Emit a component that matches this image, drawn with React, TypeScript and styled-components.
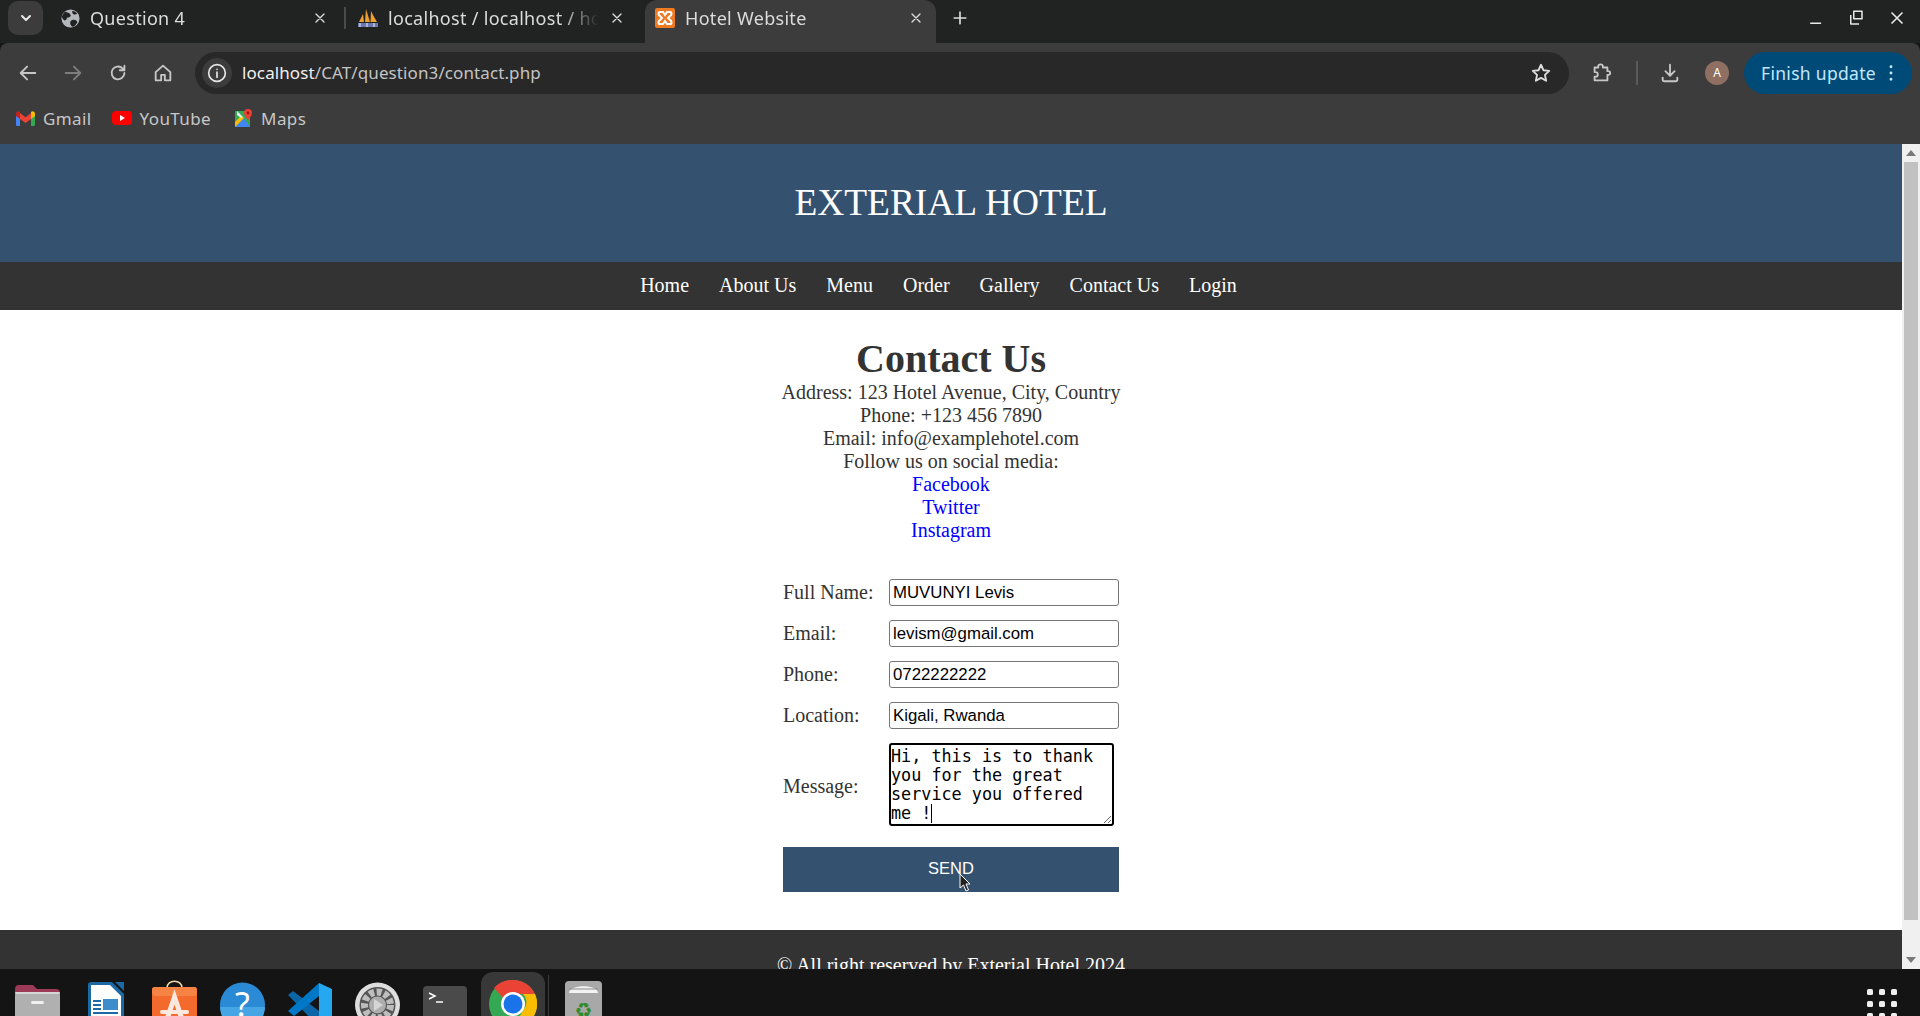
import { ReactNode } from 'react';
import styled, { createGlobalStyle } from 'styled-components';

const GlobalStyle = createGlobalStyle`
	html, body {
		margin: 0;
		padding: 0;
		height: 100%;
		overflow: hidden;
		background: #141414;
	}
	* { box-sizing: border-box; }
`;

const uiFont = `'Noto Sans', 'Open Sans', sans-serif`;
const pageFont = `'Liberation Serif', 'Times New Roman', serif`;

const Screen = styled.div`
	width: 1920px;
	height: 1016px;
	display: flex;
	flex-direction: column;
	overflow: hidden;
`;

/* browser chrome */
const TabStrip = styled.div`
	height: 43px;
	flex: none;
	background: #202322;
	display: flex;
	align-items: flex-start;
	padding-left: 8px;
	font-family: ${uiFont};
`;

const TabSearch = styled.div`
	width: 35px;
	height: 34px;
	margin: 1px 6px 0 0;
	flex: none;
	border-radius: 10px;
	background: #3c3c3c;
	color: #e8e8e8;
	display: flex;
	align-items: center;
	justify-content: center;
`;

const Tab = styled.div<{ $active?: boolean }>`
	width: 291px;
	height: ${(p) => (p.$active ? '43px' : '36px')};
	flex: none;
	margin-left: ${(p) => (p.$active ? '8px' : '0')};
	background: ${(p) => (p.$active ? '#3c3c3c' : 'transparent')};
	border-radius: ${(p) => (p.$active ? '12px 12px 0 0' : '0')};
	display: flex;
	align-items: center;
	padding: ${(p) => (p.$active ? '0 12px 7px 10px' : '0 12px')};
	gap: 10px;
	color: #dcdcdc;
	font-size: 18px;
	letter-spacing: 0.3px;

	svg {
		flex: none;
	}
`;

const TabTitle = styled.span`
	flex: 1;
	min-width: 0;
	overflow: hidden;
	white-space: nowrap;
	mask-image: linear-gradient(to right, #000 82%, transparent 100%);
`;

const TabDivider = styled.div`
	width: 2px;
	height: 22px;
	flex: none;
	margin: 7px 0 0 4px;
	background: #4a4c4b;
`;

const NewTab = styled.div`
	width: 32px;
	height: 36px;
	flex: none;
	margin-left: 8px;
	color: #dcdcdc;
	display: flex;
	align-items: center;
	justify-content: center;
`;

const WindowControls = styled.div`
	margin-left: auto;
	height: 36px;
	width: 125px;
	padding: 0 13px 0 12px;
	display: flex;
	align-items: center;
	justify-content: space-between;
	color: #e8e8e8;
`;

const Toolbar = styled.div`
	height: 56px;
	flex: none;
	background: #3c3c3c;
	border-radius: 8px 8px 0 0;
	display: flex;
	align-items: center;
	padding: 8px 8px 5px 5px;
	color: #c7c7c7;
	font-family: ${uiFont};
`;

const NavIcon = styled.div<{ $width?: number; $dim?: boolean }>`
	width: ${(p) => p.$width ?? 45}px;
	height: 42px;
	flex: none;
	display: flex;
	align-items: center;
	justify-content: center;
	color: ${(p) => (p.$dim ? '#7d7d7d' : '#c7c7c7')};
`;

const Omnibox = styled.div`
	width: 1374px;
	height: 42px;
	flex: none;
	margin: 0 6px 0 10px;
	border-radius: 21px;
	background: #282828;
	display: flex;
	align-items: center;
	padding: 0 17px 0 7px;
	color: #e6e6e6;
	font-size: 17px;
	letter-spacing: 0.1px;
`;

const InfoChip = styled.div`
	width: 30px;
	height: 30px;
	border-radius: 50%;
	background: #3c3c3c;
	display: flex;
	align-items: center;
	justify-content: center;
	margin-right: 10px;
`;

const UrlHost = styled.span`
	color: #f0f0f0;
`;

const UrlPath = styled.span`
	color: #c4c4c4;
`;

const StarSlot = styled.div`
	margin-left: auto;
	display: flex;
	color: #dedede;
`;

const ToolbarDivider = styled.div`
	width: 2px;
	height: 24px;
	flex: none;
	background: #5a5a5a;
	margin: 0 10px;
`;

const Avatar = styled.div`
	width: 24px;
	height: 24px;
	margin: 0 15px 0 13px;
	flex: none;
	border-radius: 50%;
	background: #8e6f62;
	color: #fff;
	font-size: 12px;
	display: flex;
	align-items: center;
	justify-content: center;
`;

const UpdatePill = styled.div`
	width: 168px;
	height: 42px;
	flex: none;
	border-radius: 21px;
	background: #004a77;
	color: #c2e7ff;
	display: flex;
	align-items: center;
	justify-content: space-between;
	padding: 0 11px 0 17px;
	font-size: 17.5px;
	letter-spacing: 0.3px;
	white-space: nowrap;
`;

const Bookmarks = styled.div`
	height: 45px;
	flex: none;
	background: #3c3c3c;
	display: flex;
	align-items: center;
	padding: 0 0 7px 16px;
	gap: 20px;
	color: #c7c7c7;
	font-family: ${uiFont};
	font-size: 17px;
	letter-spacing: 0.4px;
`;

const Bookmark = styled.div`
	display: flex;
	align-items: center;
	gap: 8px;

	&:nth-child(2) {
		margin-right: 4px;
	}
`;

/* page viewport */
const Viewport = styled.div`
	flex: 1;
	min-height: 0;
	display: flex;
	overflow: hidden;
`;

const Page = styled.div`
	flex: 1;
	min-width: 0;
	background: #fff;
	color: #333;
	font-family: ${pageFont};
	font-size: 20px;
	text-align: center;
`;

const Banner = styled.header`
	height: 118px;
	padding-bottom: 2px;
	background: #34526f;
	color: #fff;
	display: flex;
	align-items: center;
	justify-content: center;
	font-size: 37.4px;
	text-transform: uppercase;
`;

const NavBar = styled.nav`
	height: 48px;
	padding: 0 25px 2px 0;
	background: #333;
	display: flex;
	align-items: center;
	justify-content: center;
	gap: 30px;
`;

const NavLink = styled.a`
	color: #fff;
	text-decoration: none;
`;

const Main = styled.main`
	height: 620px;
	padding-top: 26px;
	display: flex;
	flex-direction: column;
	align-items: center;
`;

const Heading = styled.h2`
	margin: 0;
	font-size: 40px;
	line-height: 45px;
`;

const InfoLine = styled.div`
	line-height: 23px;
`;

const SocialLink = styled.a`
	display: block;
	line-height: 23px;
	color: #00f;
	text-decoration: none;
`;

const ContactForm = styled.form`
	width: 336px;
	margin-top: 37px;
	display: flex;
	flex-direction: column;
	text-align: left;
`;

const FieldRow = styled.label`
	height: 27px;
	margin-bottom: 14px;
	display: flex;
	align-items: center;
`;

const FieldLabel = styled.span`
	width: 106px;
	flex: none;
`;

const MessageLabel = styled(FieldLabel)`
	margin-top: 4px;
`;

const TextField = styled.input`
	width: 230px;
	height: 27px;
	padding: 1px 3px;
	border: 1px solid #767676;
	border-radius: 3px;
	background: #fff;
	color: #000;
	font-family: 'Liberation Sans', Arial, sans-serif;
	font-size: 16.8px;
	outline: none;
`;

const MessageRow = styled.label`
	height: 83px;
	margin-bottom: 21px;
	display: flex;
	align-items: center;
`;

const MessageWrap = styled.div`
	position: relative;
	width: 225px;
	height: 83px;
	flex: none;
`;

const MessageBox = styled.textarea`
	display: block;
	width: 225px;
	height: 83px;
	padding: 2px 0 0;
	border: 2px solid #000;
	border-radius: 3px;
	background: #fff;
	color: #000;
	font-family: 'DejaVu Sans Mono', monospace;
	font-size: 16.8px;
	line-height: 19px;
	outline: none;
	resize: both;
	overflow: hidden;
`;

const Caret = styled.span`
	position: absolute;
	left: 42px;
	top: 61px;
	width: 1px;
	height: 19px;
	background: #000;
`;

const SendButton = styled.button`
	position: relative;
	width: 336px;
	height: 45px;
	padding: 0 0 2px;
	border: none;
	background: #34526f;
	color: #fff;
	font-family: 'Liberation Sans', Arial, sans-serif;
	font-size: 16.5px;
`;

const CursorMark = styled.svg`
	position: absolute;
	left: 176px;
	top: 26px;
`;

const Footer = styled.footer`
	height: 39px;
	background: #333;
	color: #fff;
	padding-top: 24px;
	line-height: 23px;
	overflow: hidden;
	white-space: nowrap;
`;

const Scrollbar = styled.div`
	width: 18px;
	flex: none;
	background: #f0f0f0;
	display: flex;
	flex-direction: column;
	align-items: center;
`;

const ScrollArrow = styled.div<{ $down?: boolean }>`
	height: 18px;
	flex: none;
	display: flex;
	align-items: center;
	justify-content: center;
	color: #7a7a7a;
	transform: ${(p) => (p.$down ? 'rotate(180deg)' : 'none')};
`;

const ScrollThumb = styled.div`
	width: 14px;
	height: 758px;
	background: #c1c1c1;
`;

const ScrollTrack = styled.div`
	flex: 1;
`;

/* desktop dock */
const Dock = styled.div`
	height: 47px;
	flex: none;
	background: #141414;
	display: flex;
	align-items: flex-start;
	padding-left: 15px;
	overflow: hidden;
`;

const DockItem = styled.div<{ $width: number; $top: number; $gap: number }>`
	width: ${(p) => p.$width}px;
	height: 64px;
	flex: none;
	margin-top: ${(p) => p.$top}px;
	margin-right: ${(p) => p.$gap}px;
	display: flex;
`;

const ActiveDockItem = styled.div`
	width: 64px;
	height: 70px;
	flex: none;
	margin-top: 3px;
	margin-left: 14px;
	border-radius: 12px;
	background: #383838;
	display: flex;
	justify-content: center;
	padding-top: 8px;
`;

const DockSeparator = styled.div`
	width: 1px;
	height: 47px;
	flex: none;
	margin: 6px 16px 0 3px;
	background: #3a3a3a;
`;

const AppGrid = styled.div`
	margin-left: auto;
	margin-top: 20px;
	margin-right: 23px;
	display: grid;
	grid-template-columns: repeat(3, 6px);
	grid-auto-rows: 6px;
	gap: 6px;
`;

const AppDot = styled.span`
	border-radius: 1.5px;
	background: #eee;
`;

function Ico({ size = 20, children }: { size?: number; children: ReactNode }) {
	return (
		<svg width={size} height={size} viewBox="0 0 24 24" fill="none" stroke="currentColor" strokeWidth="2" strokeLinecap="round" strokeLinejoin="round">
			{children}
		</svg>
	);
}

function Close({ size = 16 }: { size?: number }) {
	return (
		<Ico size={size}>
			<path d="M6 6l12 12M18 6L6 18" />
		</Ico>
	);
}

function GlobeFav() {
	return (
		<svg width="19" height="19" viewBox="0 0 20 20">
			<circle cx="10" cy="10" r="9.5" fill="#b4b8bd" />
			<path d="M4 3c3 1 5 1 6 3s-2 3-3 3-1 3-3 3S1 9 1 8s2-4 3-5zM10 13c2-2 4-2 6-1s1 3-1 5-3 2-4 1-2-3-1-5zM12 2c2 0 4 1 5 3l-3 1c-1-1-3-2-2-4z" fill="#202322" />
		</svg>
	);
}

function PmaFav() {
	return (
		<svg width="20" height="20" viewBox="0 0 20 20">
			<path d="M1 14L5 6l1 8zM7 14L8 1l4 13zM12.500 14L13 3l2 4 4 7z" fill="#f0a030" />
			<path d="M0 15h20v4H0z" fill="#6c78af" />
			<path d="M2 15v4M9 15v4M16 15v4" stroke="#d8dcf0" strokeWidth="1.200" />
		</svg>
	);
}

function XamppFav() {
	return (
		<svg width="20" height="20" viewBox="0 0 20 20">
			<rect width="20" height="20" rx="2" fill="#ee7a22" />
			<path d="M5 4h3l2 3 2-3h3c2 0 2 3 0 4l-2 2 2 2c2 1 2 4 0 4h-3l-2-3-2 3H5c-2 0-2-3 0-4l2-2-2-2C3 7 3 4 5 4z" fill="none" stroke="#fff" strokeWidth="2" />
		</svg>
	);
}

function GmailFav() {
	return (
		<svg width="19" height="15" viewBox="0 0 19 15">
			<path d="M0 3v10.5c0 .8.6 1.5 1.4 1.5H4V6z" fill="#4285f4" />
			<path d="M15 6v9h2.6c.8 0 1.4-.7 1.4-1.5V3z" fill="#34a853" />
			<path d="M4 8V2l5.500 4.200L15 2v6L9.500 12z" fill="#ea4335" />
			<path d="M0 3c0-2.500 2.500-3.500 4-2v7L0 5z" fill="#c5221f" />
			<path d="M19 3c0-2.500-2.500-3.500-4-2v7l4-3z" fill="#fbbc04" />
		</svg>
	);
}

function YoutubeFav() {
	return (
		<svg width="20" height="14" viewBox="0 0 20 14">
			<rect width="20" height="14" rx="4" fill="#f00" />
			<path d="M8 4l5 3-5 3z" fill="#fff" />
		</svg>
	);
}

function MapsFav() {
	return (
		<svg width="18" height="18" viewBox="0 0 18 18">
			<rect y="2" width="15" height="16" rx="1" fill="#34a853" />
			<path d="M0 18l9-9 6 9z" fill="#4285f4" />
			<path d="M0 18V13L6 7l3 2z" fill="#fbbc04" />
			<path d="M2 2l6 6-2 1-4-3z" fill="#e8eaed" />
			<path d="M13 0a4 4 0 0 1 4 4c0 3-4 6-4 8 0-2-4-5-4-8a4 4 0 0 1 4-4z" fill="#ea4335" />
			<circle cx="13" cy="4" r="1.400" fill="#a50e0e" />
		</svg>
	);
}

function FolderApp() {
	return (
		<svg width="45" height="64" viewBox="0 0 45 64">
			<path d="M0 6a4 4 0 0 1 4-4h14l4 4h19a4 4 0 0 1 4 4v20H0z" fill="#9c3a58" />
			<path d="M0 11h45v6H0z" fill="#c14a32" opacity=".7" />
			<rect y="9" width="45" height="50" rx="4" fill="#b0b0b0" />
			<rect y="9" width="45" height="2" rx="1" fill="#d6d6d6" />
			<rect x="16" y="18" width="13" height="3" rx="1.500" fill="#f0f0f0" />
		</svg>
	);
}

function WriterApp() {
	return (
		<svg width="36" height="64" viewBox="0 0 36 64">
			<path d="M3 0h21l12 12v50H0V3a3 3 0 0 1 3-3z" fill="#1b6aa5" />
			<path d="M3 3h19l11 11v48H3z" fill="#fff" />
			<path d="M27 0h9v9z" fill="#1b6aa5" />
			<rect x="15" y="17" width="15" height="11" fill="#3d8ccb" />
			<rect x="5" y="18" width="8" height="2" fill="#1b6aa5" />
			<rect x="5" y="22" width="8" height="2" fill="#1b6aa5" />
			<rect x="5" y="26" width="8" height="2" fill="#1b6aa5" />
			<rect x="5" y="30" width="25" height="2" fill="#1b6aa5" />
			<rect x="5" y="34" width="25" height="2" fill="#1b6aa5" />
		</svg>
	);
}

function StoreApp() {
	return (
		<svg width="45" height="64" viewBox="0 0 45 64">
			<path d="M15 8c0-9 15-9 15 0" fill="none" stroke="#f4d9a8" strokeWidth="1.500" />
			<rect y="7" width="45" height="50" rx="3" fill="#f4692c" />
			<rect y="7" width="45" height="9" rx="3" fill="#f58343" />
			<path d="M12 48L22.500 17 33 48" fill="none" stroke="#fbe9e0" strokeWidth="5" />
			<rect x="8" y="30" width="29" height="4" rx="2" fill="#fbe9e0" />
		</svg>
	);
}

function HelpApp() {
	return (
		<svg width="45" height="64" viewBox="0 0 45 64">
			<circle cx="22.500" cy="23" r="22.500" fill="#2b8ad6" />
			<path d="M0 25h45a22.500 22.500 0 0 1-45 0z" fill="#46a5e4" />
			<text x="22.500" y="35" textAnchor="middle" fontFamily="Noto Sans, sans-serif" fontSize="34" fill="#fff">?</text>
		</svg>
	);
}

function CodeApp() {
	return (
		<svg width="44" height="64" viewBox="0 0 44 64">
			<path d="M0 12l5-4 26 20v16z" fill="#0a66a8" />
			<path d="M31 0v13L6 33l-6-5z" fill="#0078c8" />
			<path d="M31 0l13 6v32l-13 6z" fill="#24a8f0" />
		</svg>
	);
}

function SettingsApp() {
	return (
		<svg width="45" height="64" viewBox="0 0 45 64">
			<circle cx="22.500" cy="24" r="22.500" fill="#dedede" />
			<circle cx="22.500" cy="24" r="18" fill="#555" />
			<circle cx="22.500" cy="24" r="13" fill="none" stroke="#bdbdbd" strokeWidth="7" strokeDasharray="5 2.500" />
			<circle cx="22.500" cy="24" r="8.500" fill="#adadad" />
			<path d="M19 18l9 6-9 6z" fill="#d6d6d6" />
		</svg>
	);
}

function TerminalApp() {
	return (
		<svg width="44" height="64" viewBox="0 0 44 64">
			<rect width="44" height="60" rx="4" fill="#4a4a4a" />
			<path d="M6 7l6 3-6 3" fill="none" stroke="#fff" strokeWidth="1.500" />
			<path d="M13 16h7" stroke="#fff" strokeWidth="1.500" />
		</svg>
	);
}

function ChromeApp() {
	return (
		<svg width="48" height="48" viewBox="0 0 48 48">
			<circle cx="24" cy="24" r="24" fill="#34a853" />
			<path d="M24 0a24 24 0 0 1 22 14H24a10 10 0 0 0-9 5L5 8A24 24 0 0 1 24 0z" fill="#ea4335" />
			<path d="M46 14a24 24 0 0 1-22 34l11-19a11 11 0 0 0-1-15z" fill="#fbbc04" />
			<circle cx="24" cy="24" r="12" fill="#fff" />
			<circle cx="24" cy="24" r="9.500" fill="#1a73e8" />
		</svg>
	);
}

function TrashApp() {
	return (
		<svg width="37" height="64" viewBox="0 0 37 64">
			<rect width="37" height="60" rx="4" fill="#a8a8a8" />
			<path d="M4 12c0-9 29-9 29 0z" fill="#f2f2f2" />
			<path d="M4 8h29" stroke="#8a8a8a" strokeWidth="1" />
			<text x="18.500" y="36" textAnchor="middle" fontFamily="DejaVu Sans, sans-serif" fontSize="20" fill="#2e8b2e">♻</text>
		</svg>
	);
}

const navItems = ['Home', 'About Us', 'Menu', 'Order', 'Gallery', 'Contact Us', 'Login'];
const fields = [
	{ label: 'Full Name:', value: 'MUVUNYI Levis' },
	{ label: 'Email:', value: 'levism@gmail.com' },
	{ label: 'Phone:', value: '0722222222' },
	{ label: 'Location:', value: 'Kigali, Rwanda' },
];

export default function App() {
	return (
		<Screen>
			<GlobalStyle />
			<TabStrip>
				<TabSearch>
					<Ico size={16}>
						<path d="M6 9l6 6 6-6" strokeWidth="3" />
					</Ico>
				</TabSearch>
				<Tab>
					<GlobeFav />
					<TabTitle>Question 4</TabTitle>
					<Close />
				</Tab>
				<TabDivider />
				<Tab>
					<PmaFav />
					<TabTitle>localhost / localhost / ho</TabTitle>
					<Close />
				</Tab>
				<Tab $active>
					<XamppFav />
					<TabTitle>Hotel Website</TabTitle>
					<Close />
				</Tab>
				<NewTab>
					<Ico size={20}>
						<path d="M12 5v14M5 12h14" />
					</Ico>
				</NewTab>
				<WindowControls>
					<Ico size={18}>
						<path d="M5 19h13" />
					</Ico>
					<Ico size={18}>
						<path d="M9 3h11v10H9zM5 8v12h11" strokeLinecap="butt" />
					</Ico>
					<Close size={20} />
				</WindowControls>
			</TabStrip>
			<Toolbar>
				<NavIcon>
					<Ico size={22}>
						<path d="M20 12H5M11 5l-7 7 7 7" />
					</Ico>
				</NavIcon>
				<NavIcon $dim>
					<Ico size={22}>
						<path d="M4 12h15M13 5l7 7-7 7" />
					</Ico>
				</NavIcon>
				<NavIcon>
					<Ico size={22}>
						<path d="M19 12a7 7 0 1 1-2-5l2 2M19 4v5h-5" />
					</Ico>
				</NavIcon>
				<NavIcon>
					<Ico size={22}>
						<path d="M4 11l8-7 8 7v9h-6v-6h-4v6H4z" />
					</Ico>
				</NavIcon>
				<Omnibox>
					<InfoChip>
						<Ico size={20}>
							<circle cx="12" cy="12" r="10" />
							<path d="M12 11v6M12 7.500v.1" />
						</Ico>
					</InfoChip>
					<UrlHost>localhost</UrlHost>
					<UrlPath>/CAT/question3/contact.php</UrlPath>
					<StarSlot>
						<Ico size={22}>
							<path d="M12 3l2.700 6 6.300.7-4.700 4.300 1.300 6.500L12 17.300 6.400 20.500 7.700 14 3 9.700 9.300 9z" />
						</Ico>
					</StarSlot>
				</Omnibox>
				<NavIcon $width={51}>
					<Ico size={22}>
						<path d="M5 6h4V5a2.500 2.500 0 0 1 5 0v1h5v4h1a2 2 0 0 1 0 4h-1v6H5v-4h1a2.500 2.500 0 0 0 0-5H5z" />
					</Ico>
				</NavIcon>
				<ToolbarDivider />
				<NavIcon $width={44}>
					<Ico size={22}>
						<path d="M12 3v11M7 10l5 5 5-5M4 17v2a2 2 0 0 0 2 2h12a2 2 0 0 0 2-2v-2" />
					</Ico>
				</NavIcon>
				<Avatar>A</Avatar>
				<UpdatePill>
					Finish update
					<Ico size={20}>
						<path d="M12 4.500v.1M12 12v.1M12 19.500v.1" strokeWidth="3.500" />
					</Ico>
				</UpdatePill>
			</Toolbar>
			<Bookmarks>
				<Bookmark>
					<GmailFav />
					Gmail
				</Bookmark>
				<Bookmark>
					<YoutubeFav />
					YouTube
				</Bookmark>
				<Bookmark>
					<MapsFav />
					Maps
				</Bookmark>
			</Bookmarks>
			<Viewport>
				<Page>
					<Banner>Exterial Hotel</Banner>
					<NavBar>
						{navItems.map((item) => (
							<NavLink key={item} href="#">
								{item}
							</NavLink>
						))}
					</NavBar>
					<Main>
						<Heading>Contact Us</Heading>
						<InfoLine>Address: 123 Hotel Avenue, City, Country</InfoLine>
						<InfoLine>Phone: +123 456 7890</InfoLine>
						<InfoLine>Email: info@examplehotel.com</InfoLine>
						<InfoLine>Follow us on social media:</InfoLine>
						<SocialLink href="#">Facebook</SocialLink>
						<SocialLink href="#">Twitter</SocialLink>
						<SocialLink href="#">Instagram</SocialLink>
						<ContactForm>
							{fields.map((field) => (
								<FieldRow key={field.label}>
									<FieldLabel>{field.label}</FieldLabel>
									<TextField defaultValue={field.value} />
								</FieldRow>
							))}
							<MessageRow>
								<MessageLabel>Message:</MessageLabel>
								<MessageWrap>
									<MessageBox defaultValue="Hi, this is to thank you for the great service you offered me !" />
									<Caret />
								</MessageWrap>
							</MessageRow>
							<SendButton type="button">
								SEND
								<CursorMark width="13" height="19" viewBox="0 0 13 19">
									<path d="M1 1v14l3.500-3 2.500 6 2.500-1-2.500-6H11z" fill="#222" stroke="#fff" strokeWidth="1" />
								</CursorMark>
							</SendButton>
						</ContactForm>
					</Main>
					<Footer>© All right reserved by Exterial Hotel 2024</Footer>
				</Page>
				<Scrollbar>
					<ScrollArrow>
						<svg width="10" height="6" viewBox="0 0 10 6">
							<path d="M0 6l5-6 5 6z" fill="currentColor" />
						</svg>
					</ScrollArrow>
					<ScrollThumb />
					<ScrollTrack />
					<ScrollArrow $down>
						<svg width="10" height="6" viewBox="0 0 10 6">
							<path d="M0 6l5-6 5 6z" fill="currentColor" />
						</svg>
					</ScrollArrow>
				</Scrollbar>
			</Viewport>
			<Dock>
				<DockItem $width={45} $top={14} $gap={28}>
					<FolderApp />
				</DockItem>
				<DockItem $width={36} $top={13} $gap={28}>
					<WriterApp />
				</DockItem>
				<DockItem $width={45} $top={11} $gap={23}>
					<StoreApp />
				</DockItem>
				<DockItem $width={45} $top={13} $gap={23}>
					<HelpApp />
				</DockItem>
				<DockItem $width={44} $top={14} $gap={23}>
					<CodeApp />
				</DockItem>
				<DockItem $width={45} $top={12} $gap={23}>
					<SettingsApp />
				</DockItem>
				<DockItem $width={44} $top={17} $gap={0}>
					<TerminalApp />
				</DockItem>
				<ActiveDockItem>
					<ChromeApp />
				</ActiveDockItem>
				<DockSeparator />
				<DockItem $width={37} $top={12} $gap={0}>
					<TrashApp />
				</DockItem>
				<AppGrid>
					{Array.from({ length: 9 }, (_, i) => (
						<AppDot key={i} />
					))}
				</AppGrid>
			</Dock>
		</Screen>
	);
}
